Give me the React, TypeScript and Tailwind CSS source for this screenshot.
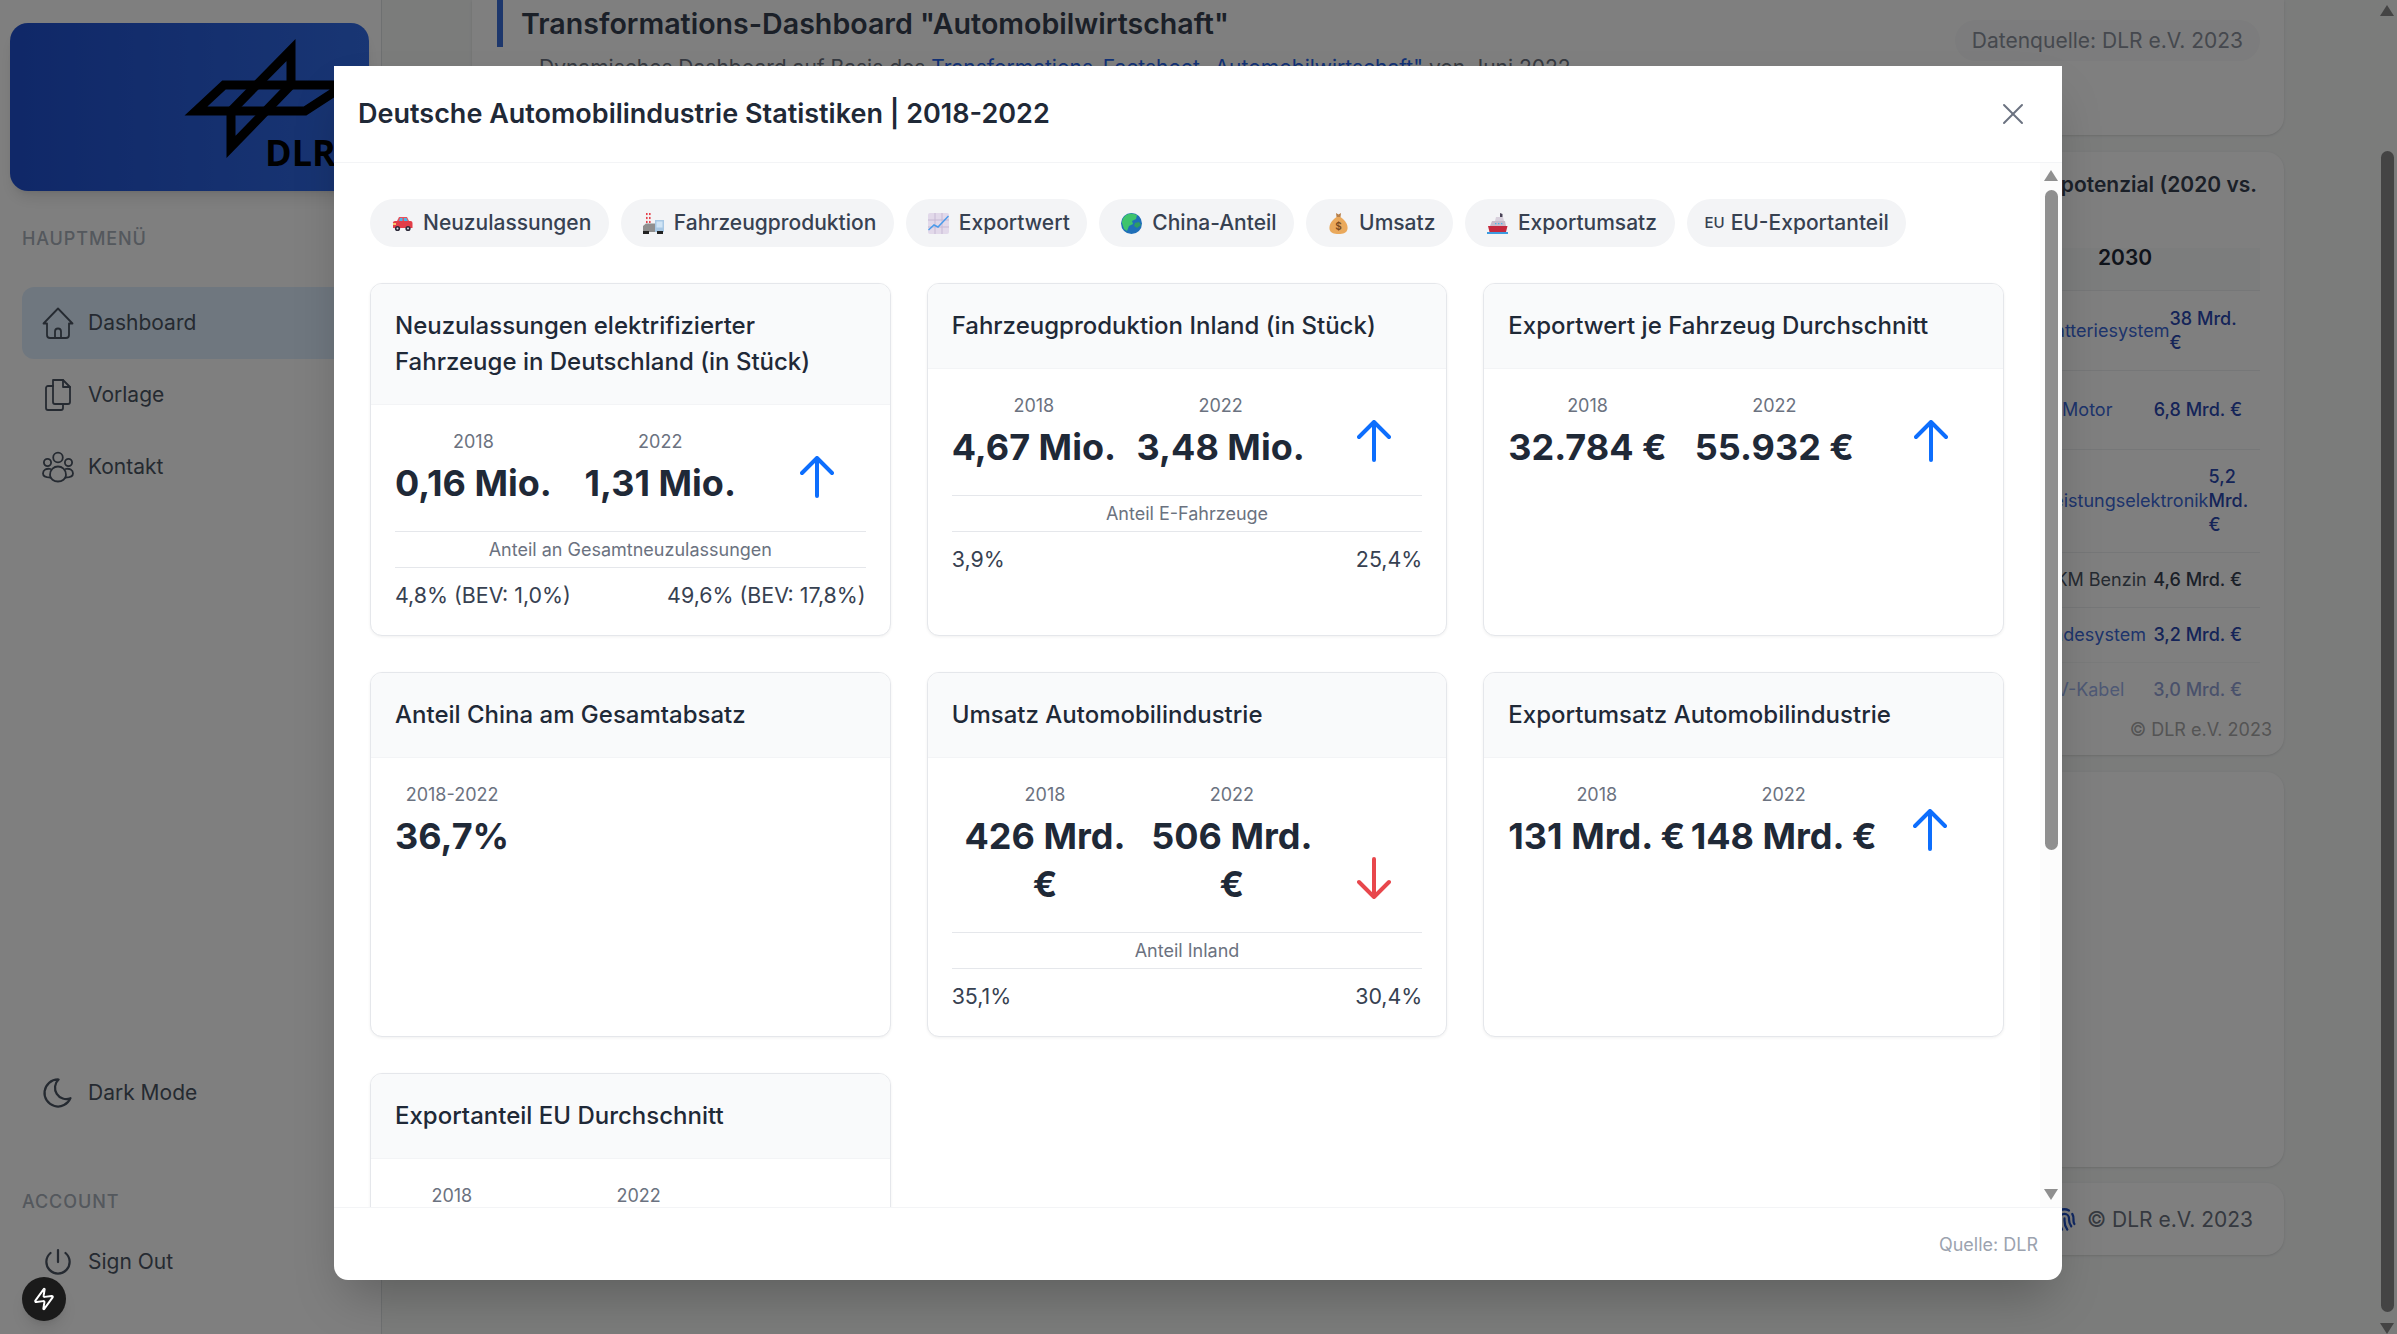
import React from "react";
import { TbMoon, TbPower, TbFingerprint } from "react-icons/tb";
import { Zap, X } from "lucide-react";

const Car = () => (
  <svg width="21" height="21" viewBox="0 0 21 21">
    <path d="M5 8 L7 4 H15 L17 8 Z" fill="#e8505b" />
    <path d="M7 8 L8 5 H10.5 V8 Z M12 8 V5 H14.5 L15.8 8 Z" fill="#4db5e8" />
    <path d="M1 9.5 Q1 8 3 8 H18.5 Q20.5 8 20.5 10 V15 H1 Z" fill="#e23d48" />
    <rect x="1" y="10" width="3" height="2" fill="#f8c36a" />
    <circle cx="5.5" cy="15.5" r="2.6" fill="#2d2a3a" />
    <circle cx="5.5" cy="15.5" r="1" fill="#d9d9e3" />
    <circle cx="16" cy="15.5" r="2.6" fill="#2d2a3a" />
    <circle cx="16" cy="15.5" r="1" fill="#d9d9e3" />
  </svg>
);
const Factory = () => (
  <svg width="21" height="21" viewBox="0 0 21 21">
    <path d="M3 0h1.6v2H3zM6 0h1.6v2H6zM3 4h1.6v2H3zM6 4h1.6v2H6zM3 8h1.6v2H3zM6 8h1.6v2H6z" fill="#e5424d" />
    <path d="M3 2h1.6v2H3zM6 2h1.6v2H6zM3 6h1.6v2H3zM6 6h1.6v2H6z" fill="#f2e6e6" />
    <rect x="12" y="7" width="9" height="12" fill="#a8c8e4" />
    <rect x="13.5" y="8.5" width="6" height="6" fill="#cfe4f5" />
    <path d="M0 13 L3 10.5 H12 V19 H0 Z" fill="#8f8f8f" />
    <rect x="0" y="18" width="6" height="3" fill="#222" />
    <rect x="14" y="18" width="6" height="3" fill="#222" />
  </svg>
);
const Chart = () => (
  <svg width="21" height="21" viewBox="0 0 21 21">
    <rect width="21" height="21" rx="2" fill="#e2d9ea" />
    <path d="M7 0V21M14 0V21M0 7H21M0 14H21" stroke="#c6b9d4" strokeWidth="1" />
    <path d="M0.5 17 L6 12 L10 14 L20.5 3" stroke="#4a9bea" strokeWidth="1.5" fill="none" />
  </svg>
);
const Globe = () => (
  <svg width="21" height="21" viewBox="0 0 21 21">
    <circle cx="10.5" cy="10.5" r="10.5" fill="#1f6fb8" />
    <path d="M5 2 Q10 -1 16 2 L15 6 L11 8 L12 11 L8 13 L6 18 L3 16 L1 10 Q1 5 5 2 Z" fill="#3ec46d" />
    <path d="M14 10 L18 9 L20 12 L16 15 L13 13 Z" fill="#2f9d63" />
  </svg>
);
const Bag = () => (
  <svg width="21" height="21" viewBox="0 0 21 21">
    <path d="M8 0 L10.5 1.5 L13 0 L12.5 4 H8.5 Z" fill="#b8804a" />
    <path d="M8.5 4 H12.5 C18 8 20 12 19.5 16 C19 20 15 21 10.5 21 C6 21 2 20 1.5 16 C1 12 3 8 8.5 4 Z" fill="#eaa95c" />
    <text x="10.5" y="17" fontSize="10" textAnchor="middle" fill="#7a4a1e" fontFamily="Inter, sans-serif" fontWeight="600">$</text>
  </svg>
);
const Ship = () => (
  <svg width="21" height="21" viewBox="0 0 21 21">
    <path d="M13 0 L15.5 1 V4 H13 Z" fill="#4a4458" />
    <path d="M9 4 H16 L17 8 H8 Z" fill="#d8d0dc" />
    <path d="M5 8 H18 L19 13 H3 Z" fill="#c7bcca" />
    <path d="M8 10h1.4v1.2H8zM11 10h1.4v1.2H11zM14 10h1.4v1.2H14z" fill="#4db5e8" />
    <path d="M1 13 H20.5 L19 19 H2.5 Z" fill="#c5283d" />
    <rect x="0" y="19" width="21" height="2" fill="#3d9be0" />
  </svg>
);

const HomeIcon = () => (
  <svg width="32" height="32" viewBox="0 0 32 32" fill="none" stroke="currentColor" strokeWidth="1.8" strokeLinejoin="round" strokeLinecap="round" className="shrink-0">
    <path d="M16 1.5 L1.5 16.5 H5 V28 a3 3 0 0 0 3 3 H24 a3 3 0 0 0 3 -3 V16.5 H30.5 Z" />
    <path d="M13 31 V24.5 a3 3 0 0 1 6 0 V31" />
  </svg>
);
const FilesIcon = () => (
  <svg width="32" height="32" viewBox="0 0 32 32" fill="none" stroke="currentColor" strokeWidth="1.8" strokeLinejoin="round" strokeLinecap="round" className="shrink-0">
    <path d="M11 1 H21 L28 8 V23 a2 2 0 0 1 -2 2 H13 a2 2 0 0 1 -2 -2 Z" />
    <path d="M21 1 V8 H28" />
    <path d="M11 7 H6 a2 2 0 0 0 -2 2 V29 a2 2 0 0 0 2 2 H19 a2 2 0 0 0 2 -2 V25" />
  </svg>
);
const PeopleIcon = () => (
  <svg width="32" height="32" viewBox="0 0 32 32" fill="none" stroke="currentColor" strokeWidth="1.8" strokeLinejoin="round" strokeLinecap="round" className="shrink-0">
    <circle cx="16" cy="6.5" r="4.8" />
    <circle cx="5.5" cy="11.5" r="3.6" />
    <circle cx="26.5" cy="11.5" r="3.6" />
    <path d="M8 24 C8 18.5 12 15.5 16 15.5 C20 15.5 24 18.5 24 24 C24 28 20 30.5 16 30.5 C12 30.5 8 28 8 24 Z" />
    <path d="M8.5 18 C4.5 17 1 19 1 22.5 C1 25 3.5 26.5 8.5 26.5" />
    <path d="M23.5 18 C27.5 17 31 19 31 22.5 C31 25 28.5 26.5 23.5 26.5" />
  </svg>
);

const pills: [React.ReactNode, string][] = [
  [<Car />, "Neuzulassungen"],
  [<Factory />, "Fahrzeugproduktion"],
  [<Chart />, "Exportwert"],
  [<Globe />, "China-Anteil"],
  [<Bag />, "Umsatz"],
  [<Ship />, "Exportumsatz"],
];

const ArrowUp = () => (
  <svg width="34" height="42" viewBox="0 0 34 42" fill="none" stroke="#0d6efd" strokeWidth="4" strokeLinecap="round" strokeLinejoin="round">
    <path d="M17 40 V2 M2 17 L17 2 L32 17" />
  </svg>
);
const ArrowDown = () => (
  <svg width="34" height="42" viewBox="0 0 34 42" fill="none" stroke="#e8474c" strokeWidth="4" strokeLinecap="round" strokeLinejoin="round">
    <path d="M17 2 V40 M2 25 L17 40 L32 25" />
  </svg>
);

type CardData = {
  title: React.ReactNode;
  cols: [string, string][];
  trend?: "up" | "down";
  share?: { label: string; a: string; b: string };
};

const cards: CardData[] = [
  {
    title: "Neuzulassungen elektrifizierter Fahrzeuge in Deutschland (in Stück)",
    cols: [["2018", "0,16 Mio."], ["2022", "1,31 Mio."]],
    trend: "up",
    share: { label: "Anteil an Gesamtneuzulassungen", a: "4,8% (BEV: 1,0%)", b: "49,6% (BEV: 17,8%)" },
  },
  {
    title: "Fahrzeugproduktion Inland (in Stück)",
    cols: [["2018", "4,67 Mio."], ["2022", "3,48 Mio."]],
    trend: "up",
    share: { label: "Anteil E-Fahrzeuge", a: "3,9%", b: "25,4%" },
  },
  {
    title: "Exportwert je Fahrzeug Durchschnitt",
    cols: [["2018", "32.784 €"], ["2022", "55.932 €"]],
    trend: "up",
  },
  { title: "Anteil China am Gesamtabsatz", cols: [["2018-2022", "36,7%"]] },
  {
    title: "Umsatz Automobilindustrie",
    cols: [["2018", "426 Mrd. €"], ["2022", "506 Mrd. €"]],
    trend: "down",
    share: { label: "Anteil Inland", a: "35,1%", b: "30,4%" },
  },
  {
    title: "Exportumsatz Automobilindustrie",
    cols: [["2018", "131 Mrd. €"], ["2022", "148 Mrd. €"]],
    trend: "up",
  },
  {
    title: "Exportanteil EU Durchschnitt",
    cols: [["2018", "76,3%"], ["2022", "72,1%"]],
    trend: "down",
  },
];

function StatCard({ c }: { c: CardData }) {
  return (
    <div className="flex flex-col overflow-hidden rounded-[12px] border border-[#e5e7eb] bg-white shadow-[0_1px_3px_rgba(0,0,0,0.06)]">
      <div className="border-b border-[#f3f4f6] bg-[#f9fafb] p-[24px] text-[24px] leading-[36px] font-medium text-[#1f2937]">
        {c.title}
      </div>
      <div className="flex flex-col px-[24px] pt-[23px] pb-[24px]">
        <div className="flex items-end justify-between">
          {c.cols.map(([y, v]) => (
            <div key={y} className="text-center">
              <div className="mb-[4px] text-[18px] leading-[27px] text-[#6b7280]">{y}</div>
              <div className="text-[36px] leading-[48px] font-bold text-[#1f2937]">{v}</div>
            </div>
          ))}
          {c.trend && (
            <div className="flex w-[97px] shrink-0 justify-center pb-[9px]">
              {c.trend === "up" ? <ArrowUp /> : <ArrowDown />}
            </div>
          )}
        </div>
        {c.share && (
          <>
            <div className="mt-[24px] border-y border-[#e5e7eb] py-[4px] text-center text-[18px] leading-[27px] text-[#6b7280]">
              {c.share.label}
            </div>
            <div className="mt-[12px] flex justify-between text-[21.4px] leading-[31px] text-[#374151]">
              <span>{c.share.a}</span>
              <span>{c.share.b}</span>
            </div>
          </>
        )}
      </div>
    </div>
  );
}

const tbIcon = "-mx-[2px] h-[36px] w-[36px] shrink-0 stroke-[1.5]";

function NavItem({ icon, label, active }: { icon: React.ReactNode; label: string; active?: boolean }) {
  return (
    <div className={`flex h-[72px] items-center gap-[14px] rounded-[12px] pl-[20px] text-[21px] text-[#4b5563] ${active ? "bg-[#dfeffe]" : ""}`}>
      {icon}
      <span>{label}</span>
    </div>
  );
}

const rows: { label: string; value: string; blue?: boolean; h: string; faded?: boolean }[] = [
  { label: "Batteriesystem", value: "38 Mrd. €", blue: true, h: "min-h-[80px]" },
  { label: "E-Motor", value: "6,8 Mrd. €", blue: true, h: "min-h-[79px]" },
  { label: "Leistungselektronik", value: "5,2 Mrd. €", blue: true, h: "min-h-[103px]" },
  { label: "VKM Benzin", value: "4,6 Mrd. €", h: "min-h-[55px]" },
  { label: "Ladesystem", value: "3,2 Mrd. €", blue: true, h: "min-h-[55px]" },
  { label: "HV-Kabel", value: "3,0 Mrd. €", blue: true, h: "min-h-[55px]", faded: true },
];

export default function App() {
  return (
    <div className="relative flex h-screen w-full overflow-hidden bg-[#f6f8f7] [font-family:Inter,sans-serif]">
      {/* Sidebar */}
      <aside className="flex w-[382px] shrink-0 flex-col border-r border-[#dde0e3] bg-white">
        <div className="mt-[23px] ml-[10px] h-[168px] w-[359px] shrink-0 rounded-[18px] bg-gradient-to-r from-[#2050d0] to-[#326ce8] shadow-lg">
          <svg viewBox="10 23 359 168" className="block h-full w-full">
            <path d="M196 111 L224 85 H345 L305 111 Z" fill="none" stroke="#000" strokeWidth="9" strokeMiterlimit="10" />
            <path d="M291 50 V85 L231 147 V111 Z" fill="none" stroke="#000" strokeWidth="9" strokeMiterlimit="10" />
            <text x="265" y="166" fontSize="36" fontWeight="700" fontFamily="'Open Sans', sans-serif" fill="#000">DLR</text>
          </svg>
        </div>
        <div className="mt-[34px] pl-[22px] text-[18px] leading-[27px] font-medium tracking-[0.05em] text-[#a8b0ba]">HAUPTMENÜ</div>
        <nav className="mt-[35px] flex flex-col pr-[22px] pl-[22px]">
          <NavItem active icon={<HomeIcon />} label="Dashboard" />
          <NavItem icon={<FilesIcon />} label="Vorlage" />
          <NavItem icon={<PeopleIcon />} label="Kontakt" />
        </nav>
        <div className="mt-auto flex flex-col px-[22px] pb-[36px]">
          <NavItem icon={<TbMoon className={tbIcon} />} label="Dark Mode" />
          <div className="mt-[59px] mb-[11px] text-[18px] leading-[27px] font-medium tracking-[0.05em] text-[#a8b0ba]">ACCOUNT</div>
          <NavItem icon={<TbPower className={tbIcon} />} label="Sign Out" />
        </div>
      </aside>

      {/* Main */}
      <main className="flex min-w-0 flex-1 flex-col gap-[17px] pr-[92px] pl-[90px]">
        <div className="flex h-[135px] shrink-0 justify-between rounded-b-[18px] bg-white pr-[24px] pl-[25px] shadow-sm">
          <div>
            <div className="border-l-[6px] border-[#3b6fd8] pl-[18px] text-[28.6px] leading-[47px] font-semibold whitespace-nowrap text-[#374151]">
              Transformations-Dashboard "Automobilwirtschaft"
            </div>
            <div className="mt-[5px] pl-[42px] text-[21px] leading-[31px] whitespace-nowrap text-[#6b7280]">
              Dynamisches Dashboard auf Basis des{" "}
              <span className="text-[#2563eb] underline">Transformations-Factsheet „Automobilwirtschaft"</span> von Juni 2022
            </div>
          </div>
          <div className="mt-[20px] flex h-[41px] items-center rounded-full bg-[#f8f9fa] px-[17px] text-[21px] text-[#8b919c]">
            Datenquelle: DLR e.V. 2023
          </div>
        </div>

        <div className="flex min-h-0 flex-1 gap-[18px]">
          <div className="flex-1" />
          <div className="flex w-[439px] shrink-0 flex-col">
            <div className="h-[603px] shrink-0 overflow-hidden rounded-[18px] bg-white pt-[20px] shadow-sm">
              <div className="pl-[46px] text-[21px] leading-[26px] font-semibold whitespace-nowrap text-[#374151]">
                Wertschöpfungspotenzial (2020 vs.
              </div>
              <div className="mt-[50px] ml-[180px] w-[235px]">
                <div className="h-[42px] bg-[#f9fafb] pl-[73px] text-[21px] leading-[20px] font-semibold text-[#1f2937]">2030</div>
                <div className="h-[408px] overflow-hidden">
                  {rows.map((r) => (
                    <div
                      key={r.label}
                      className={`flex items-center justify-between gap-0 border-t border-[#eceef0] px-[18px] text-[18px] leading-[24px] ${r.h} ${r.faded ? "opacity-50" : ""}`}
                    >
                      <span className={`shrink-0 whitespace-nowrap ${r.blue ? "text-[#3b68d8]" : "text-[#4b5563]"}`}>{r.label}</span>
                      <span className={`min-w-0 font-medium ${r.blue ? "text-[#2a48b0]" : "text-[#374151]"}`}>{r.value}</span>
                    </div>
                  ))}
                </div>
                <div className="mt-[18px] -mr-[12px] text-right text-[18px] leading-[27px] whitespace-nowrap text-[#a8a8a8]">© DLR e.V. 2023</div>
              </div>
            </div>
            <div className="mt-[17px] h-[395px] shrink-0 rounded-[18px] bg-white shadow-sm" />
            <div className="mt-[16px] flex h-[72px] shrink-0 items-center justify-end gap-[9px] rounded-[18px] bg-white pt-[1px] pr-[31px] text-[21px] text-[#6b7280] shadow-sm">
              <TbFingerprint className="h-[27px] w-[27px] text-[#1e4fc4]" />
              <span>© DLR e.V. 2023</span>
            </div>
          </div>
        </div>
      </main>

      {/* Page scrollbar */}
      <div className="flex w-[21px] shrink-0 flex-col items-center pt-[5px] pl-[1px]">
        <div className="h-0 w-0 border-x-[7px] border-b-[11px] border-x-transparent border-b-[#888]" />
        <div className="mt-[135px] h-[1168px] w-[13px] rounded-full bg-[#888]" />
        <div className="mt-[11px] h-0 w-0 border-x-[7px] border-t-[11px] border-x-transparent border-t-[#888]" />
      </div>

      {/* Modal */}
      <div className="absolute inset-0 flex items-start bg-black/50 pt-[66px] pl-[334px]">
        <div className="flex h-[1214px] w-[1728px] flex-col overflow-hidden rounded-b-[14px] bg-white shadow-2xl">
          <div className="flex h-[97px] shrink-0 items-center justify-between border-b border-[#f3f4f6] pr-[31px] pl-[24px]">
            <div className="text-[27px] font-semibold text-[#1f2937]">Deutsche Automobilindustrie Statistiken | 2018-2022</div>
            <X className="h-[36px] w-[36px] text-[#6b7280]" strokeWidth={1.3} />
          </div>

          <div className="flex min-h-0 flex-1">
            <div className="min-w-0 flex-1 overflow-hidden px-[36px] pt-[36px]">
              <div className="mb-[36px] flex flex-nowrap gap-[12px]">
                {pills.map(([icon, label]) => (
                  <div key={label} className="flex h-[48px] items-center gap-[10px] rounded-full bg-[#f3f4f6] pr-[17.5px] pl-[22px] text-[21px] font-medium whitespace-nowrap text-[#374151]">
                    {icon}
                    <span>{label}</span>
                  </div>
                ))}
                <div className="flex h-[48px] items-center gap-[6px] rounded-full bg-[#f3f4f6] pr-[17px] pl-[18px] text-[21px] font-medium whitespace-nowrap text-[#374151]">
                  <span className="text-[15px]">EU</span>
                  <span>EU-Exportanteil</span>
                </div>
              </div>
              <div className="grid grid-cols-3 gap-[36px]">
                {cards.map((c, i) => (
                  <StatCard key={i} c={c} />
                ))}
              </div>
            </div>
            <div className="flex w-[22px] shrink-0 flex-col items-center bg-[#fcfcfc] pt-[7px] pb-[7px]">
              <div className="h-0 w-0 border-x-[7px] border-b-[11px] border-x-transparent border-b-[#8f8f8f]" />
              <div className="mt-[9px] h-[660px] w-[13px] rounded-full bg-[#8f8f8f]" />
              <div className="mt-auto h-0 w-0 border-x-[7px] border-t-[11px] border-x-transparent border-t-[#8f8f8f]" />
            </div>
          </div>

          <div className="flex h-[73px] shrink-0 items-center justify-end border-t border-[#f3f4f6] pr-[24px] text-[18px] text-[#9ca3af]">
            Quelle: DLR
          </div>
        </div>
      </div>

      {/* Dev indicator */}
      <div className="absolute bottom-[13px] left-[22px] flex h-[44px] w-[44px] items-center justify-center rounded-full bg-[#1a1a1a] shadow-lg">
        <Zap className="h-[24px] w-[24px] rotate-[-8deg] text-white" strokeWidth={2} />
      </div>
    </div>
  );
}
